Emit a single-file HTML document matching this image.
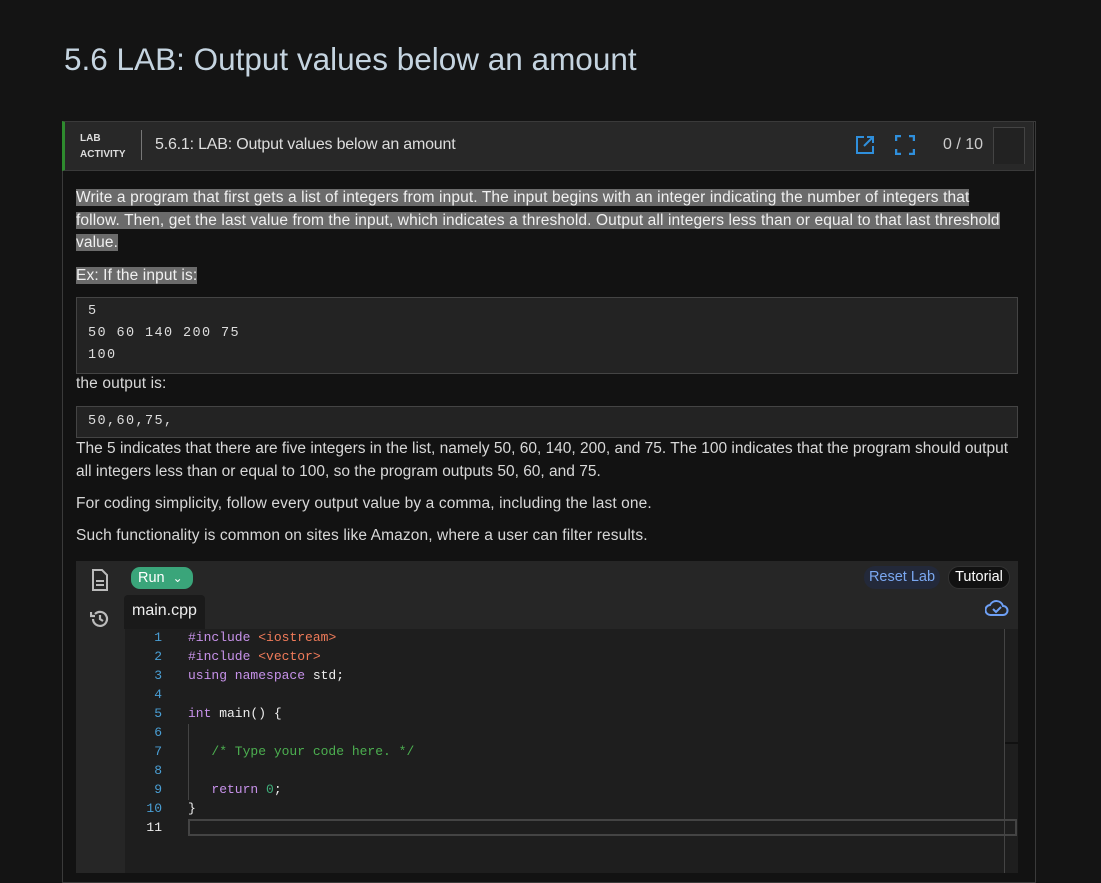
<!DOCTYPE html>
<html><head><style>
body{margin:0;background:#141414;font-family:"Liberation Sans",sans-serif;color:#d4d4d4;width:1101px;height:873px;overflow:hidden;position:relative}
.abs{position:absolute}
h1{position:absolute;left:64px;top:41px;margin:0;font-weight:400;font-size:31.5px;color:#c5d4e0;letter-spacing:0}
.card{left:62px;top:121px;width:972px;height:760px;border:1px solid #3a3a3a;background:#121212}
.hdr{left:62px;top:121px;width:972px;height:50px;background:#282828;border:1px solid #3a3a3a;border-left:3px solid #2e8b2e;box-sizing:border-box}
p{margin:0}
.hl{background:#6b6b6b;color:#f0f0f0}
.txt{font-size:15.5px;line-height:22.5px;color:#d8d8d8;letter-spacing:0.12px;white-space:nowrap}
.pre{background:#232323;border:1px solid #444;font-family:"Liberation Mono",monospace;font-size:13.5px;color:#ddd;line-height:22px;padding-left:11px;box-sizing:border-box;letter-spacing:1.4px}
.code{font-family:"Liberation Mono",monospace;font-size:13px;line-height:19px;white-space:pre}
.kw{color:#c792ea}.st{color:#f07b5a}.cm{color:#4caf50}.num{color:#3fae7a}
</style></head><body>
<h1>5.6 LAB: Output values below an amount</h1>
<div class="abs card"></div>
<div class="abs hdr"></div>
<div class="abs" style="left:80px;top:131px;font-size:10px;font-weight:700;color:#ddd;line-height:16px">LAB<br>ACTIVITY</div>
<div class="abs" style="left:141px;top:130px;width:1px;height:30px;background:#777"></div>
<div class="abs" style="left:155px;top:136px;font-size:16px;color:#ddd;letter-spacing:-0.2px">5.6.1: LAB: Output values below an amount</div>
<svg class="abs" style="left:855px;top:135px" width="20" height="20" viewBox="0 0 20 20" fill="none" stroke="#2f8fdc" stroke-width="2"><path d="M9 2H2v16h16v-7M12 2h6v6M18 2l-9 9"/></svg>
<svg class="abs" style="left:895px;top:135px" width="20" height="20" viewBox="0 0 20 20" fill="none" stroke="#2f8fdc" stroke-width="2.5"><path d="M1 6V1h5M14 1h5v5M19 14v5h-5M6 19H1v-5"/></svg>
<div class="abs" style="left:943px;top:136px;font-size:16px;color:#ccc">0 / 10</div>
<div class="abs" style="left:993px;top:127px;width:30px;height:36px;border:1px solid #444;border-bottom:none;background:#222"></div>
<div class="abs txt" style="left:76px;top:187px"><span class="hl">Write a program that first gets a list of integers from input. The input begins with an integer indicating the number of integers that</span><br><span class="hl">follow. Then, get the last value from the input, which indicates a threshold. Output all integers less than or equal to that last threshold</span><br><span class="hl">value.</span></div>
<div class="abs txt" style="left:76px;top:265px"><span class="hl">Ex: If the input is:</span></div>
<div class="abs pre" style="left:76px;top:297px;width:942px;height:77px;padding-top:3px">5<br>50 60 140 200 75<br>100</div>
<div class="abs txt" style="left:76px;top:373px">the output is:</div>
<div class="abs pre" style="left:76px;top:406px;width:942px;height:32px;padding-top:4px">50,60,75,</div>
<div class="abs txt" style="left:76px;top:438px;letter-spacing:0">The 5 indicates that there are five integers in the list, namely 50, 60, 140, 200, and 75. The 100 indicates that the program should output<br>all integers less than or equal to 100, so the program outputs 50, 60, and 75.</div>
<div class="abs txt" style="left:76px;top:493px">For coding simplicity, follow every output value by a comma, including the last one.</div>
<div class="abs txt" style="left:76px;top:525px">Such functionality is common on sites like Amazon, where a user can filter results.</div>
<div class="abs" style="left:76px;top:561px;width:942px;height:312px;background:#262626"></div>
<div class="abs" style="left:125px;top:629px;width:893px;height:244px;background:#1e1e1e"></div>
<div class="abs" style="left:1004px;top:629px;width:1px;height:244px;background:#444"></div>
<div class="abs" style="left:1005px;top:742px;width:13px;height:2px;background:#111"></div>
<div class="abs" style="left:124px;top:595px;width:81px;height:34px;background:#1a1a1a;border-radius:4px 4px 0 0"></div>
<div class="abs" style="left:132px;top:602px;font-size:16px;color:#eee">main.cpp</div>
<svg class="abs" style="left:91px;top:569px" width="18" height="22" viewBox="0 0 18 22" fill="none" stroke="#bbb" stroke-width="2"><path d="M2 1h9l5 5v15H2z M5 12h8M5 16h8"/></svg>
<svg class="abs" style="left:90px;top:609px" width="20" height="20" viewBox="0 0 20 20" fill="none" stroke="#bbb" stroke-width="2.2"><path d="M3 10a7 7 0 1 0 2-5M1 3v4h4M10 6v4l3 2"/></svg>
<div class="abs" style="left:131px;top:567px;width:62px;height:22px;background:#3aa57a;border-radius:9px;color:#fff;font-size:14.5px;line-height:22px;padding-left:7px;box-sizing:border-box">Run <span style="font-size:12px;margin-left:4px">&#8964;</span></div>
<div class="abs" style="left:864px;top:566px;width:76px;height:23px;background:#23293a;border-radius:11px;color:#7aa7f0;font-size:14.5px;line-height:23px;text-align:center">Reset Lab</div>
<div class="abs" style="left:948px;top:566px;width:62px;height:23px;background:#111;border:1px solid #333;border-radius:11px;color:#fff;font-size:14.5px;line-height:21px;text-align:center;box-sizing:border-box">Tutorial</div>
<svg class="abs" style="left:985px;top:598px" width="24" height="20" viewBox="0 0 24 20" fill="none" stroke="#6ea0f5" stroke-width="2"><path d="M6 17a5 5 0 0 1-1-10 7 7 0 0 1 13 1 4.5 4.5 0 0 1 0 9z M8 11l3 3 5-5"/></svg>
<div class="abs code" style="left:136px;top:628px;width:26px;text-align:right;color:#4a9fd5">1
2
3
4
5
6
7
8
9
10
<span style="color:#eee">11</span></div>
<div class="abs" style="left:188px;top:724px;width:1px;height:76px;background:#444"></div>
<div class="abs" style="left:188px;top:819px;width:829px;height:17px;border:2px solid #444;box-sizing:border-box"></div>
<div class="abs code" style="left:188px;top:628px;color:#eee"><span class="kw">#include</span> <span class="st">&lt;iostream&gt;</span>
<span class="kw">#include</span> <span class="st">&lt;vector&gt;</span>
<span class="kw">using namespace</span> std;

<span class="kw">int</span> main() {

   <span class="cm">/* Type your code here. */</span>

   <span class="kw">return</span> <span class="num">0</span>;
}</div>
</body></html>
